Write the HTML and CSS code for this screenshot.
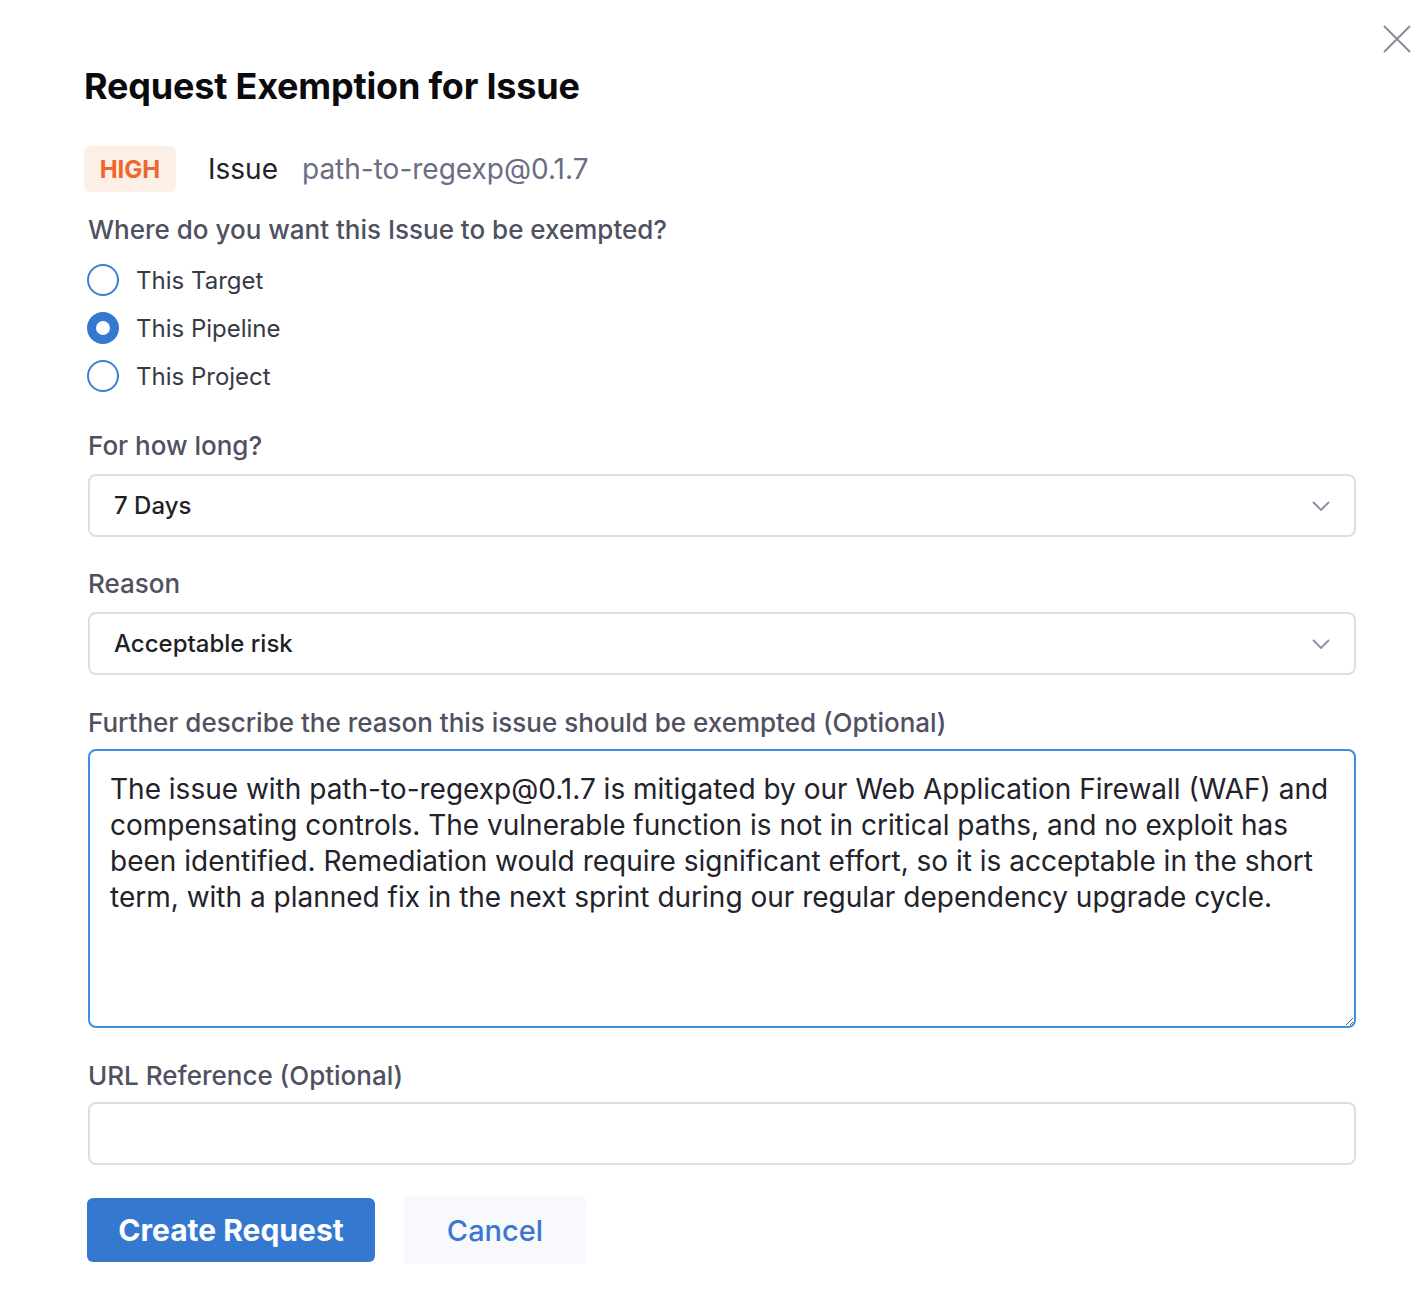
FILE: index.html
```html
<!DOCTYPE html>
<html>
<head>
<meta charset="utf-8">
<link rel="stylesheet" href="styles.css">
</head>
<body>
<div class="dialog">
  <button class="close" aria-label="Close">
    <svg width="28" height="28" viewBox="0 0 28 28"><path d="M1 1L27 27M27 1L1 27" stroke="#8b8ca3" stroke-width="2" fill="none"/></svg>
  </button>
  <h1 class="title">Request Exemption for Issue</h1>
  <div class="issue-row">
    <span class="badge">HIGH</span>
    <span class="issue-label">Issue</span>
    <span class="issue-name">path-to-regexp@0.1.7</span>
  </div>
  <div class="form">
    <div class="label">Where do you want this Issue to be exempted?</div>
    <div class="radios">
      <label class="radio"><span class="dot"></span><span>This Target</span></label>
      <label class="radio"><span class="dot checked"></span><span>This Pipeline</span></label>
      <label class="radio"><span class="dot"></span><span>This Project</span></label>
    </div>
    <div class="label label-long">For how long?</div>
    <div class="select">
      <span>7 Days</span>
      <svg width="18" height="10" viewBox="0 0 18 10"><path d="M1 1L9 9L17 1" stroke="#8b8ca3" stroke-width="1.8" fill="none"/></svg>
    </div>
    <div class="label label-reason">Reason</div>
    <div class="select">
      <span>Acceptable risk</span>
      <svg width="18" height="10" viewBox="0 0 18 10"><path d="M1 1L9 9L17 1" stroke="#8b8ca3" stroke-width="1.8" fill="none"/></svg>
    </div>
    <div class="label label-gap">Further describe the reason this issue should be exempted (Optional)</div>
    <textarea class="textarea">The issue with path-to-regexp@0.1.7 is mitigated by our Web Application Firewall (WAF) and compensating controls. The vulnerable function is not in critical paths, and no exploit has been identified. Remediation would require significant effort, so it is acceptable in the short term, with a planned fix in the next sprint during our regular dependency upgrade cycle.</textarea>
    <div class="label label-gap">URL Reference (Optional)</div>
    <input class="input" type="text">
    <div class="actions">
      <button class="btn primary">Create Request</button>
      <button class="btn secondary">Cancel</button>
    </div>
  </div>
</div>
</body>
</html>
```
FILE: styles.css
```css
* { box-sizing: border-box; }
body {
  margin: 0;
  background: #ffffff;
  font-family: Inter, "Noto Sans", sans-serif;
}
.dialog {
  position: relative;
  padding: 66px 72px 0 84px;
}
.close {
  position: absolute;
  top: 25px;
  right: 17px;
  border: none;
  background: none;
  padding: 0;
  width: 28px;
  height: 28px;
}
.title {
  margin: 0;
  font-size: 36px;
  font-weight: 700;
  line-height: 40px;
  color: #0b0b0d;
  letter-spacing: -0.2px;
}
.issue-row {
  display: flex;
  align-items: center;
  margin-top: 40px;
  height: 46px;
}
.badge {
  display: inline-flex;
  align-items: center;
  justify-content: center;
  width: 92px;
  height: 46px;
  background: #fcf0e6;
  color: #ee6630;
  border-radius: 6px;
  font-weight: 700;
  font-size: 24px;
}
.issue-label {
  margin-left: 32px;
  font-size: 28px;
  color: #22222a;
}
.issue-name {
  margin-left: 24px;
  font-size: 28px;
  color: #6b6d85;
}
.form {
  padding-left: 4px;
  width: 1272px;
}
.label {
  font-size: 26px;
  line-height: 32px;
  color: #4f5162;
  font-weight: 500;
}
.form > .label:first-child { margin-top: 22px; }
.radios {
  display: flex;
  flex-direction: column;
  margin-top: 10px;
}
.radio {
  display: flex;
  align-items: center;
  height: 48px;
  font-size: 24px;
  color: #383946;
}
.dot {
  width: 32px;
  height: 32px;
  border-radius: 50%;
  border: 2px solid #3a7fd5;
  margin-left: -1px;
  margin-right: 17px;
  flex: none;
}
.dot.checked {
  border: 9px solid #3578d0;
}
.label-long { margin-top: 30px; }
.label-reason { margin-top: 31px; }
.label-gap { margin-top: 32px; }
.select {
  margin-top: 12px;
  height: 63px;
  border: 2px solid #dcdde8;
  border-radius: 8px;
  display: flex;
  align-items: center;
  justify-content: space-between;
  padding: 0 24px 0 24px;
  font-size: 24px;
  font-weight: 500;
  color: #1f1f26;
}
.textarea {
  display: block;
  margin-top: 10px;
  width: 100%;
  height: 279px;
  border: 2px solid #3d8ee0;
  border-radius: 8px;
  padding: 20px 20px;
  font-family: Inter, "Noto Sans", sans-serif;
  font-size: 28px;
  line-height: 36px;
  color: #22222a;
  resize: both;
  outline: none;
}
.input {
  display: block;
  margin-top: 10px;
  width: 100%;
  height: 63px;
  border: 2px solid #dcdde8;
  border-radius: 8px;
  outline: none;
}
.actions {
  display: flex;
  align-items: center;
  gap: 29px;
  margin-top: 31px;
}
.btn {
  font-family: Inter, "Noto Sans", sans-serif;
  font-size: 29px;
  height: 64px;
  border-radius: 6px;
  border: none;
}
.primary {
  width: 288px;
  background: #3578d0;
  color: #ffffff;
  font-weight: 700;
  font-size: 30px;
  margin-left: -1px;
}
.secondary {
  width: 182px;
  height: 68px;
  background: #f8f9fc;
  color: #3a78cf;
  font-weight: 500;
  box-shadow: 0 0 2px rgba(0,0,0,0.06);
}
```
